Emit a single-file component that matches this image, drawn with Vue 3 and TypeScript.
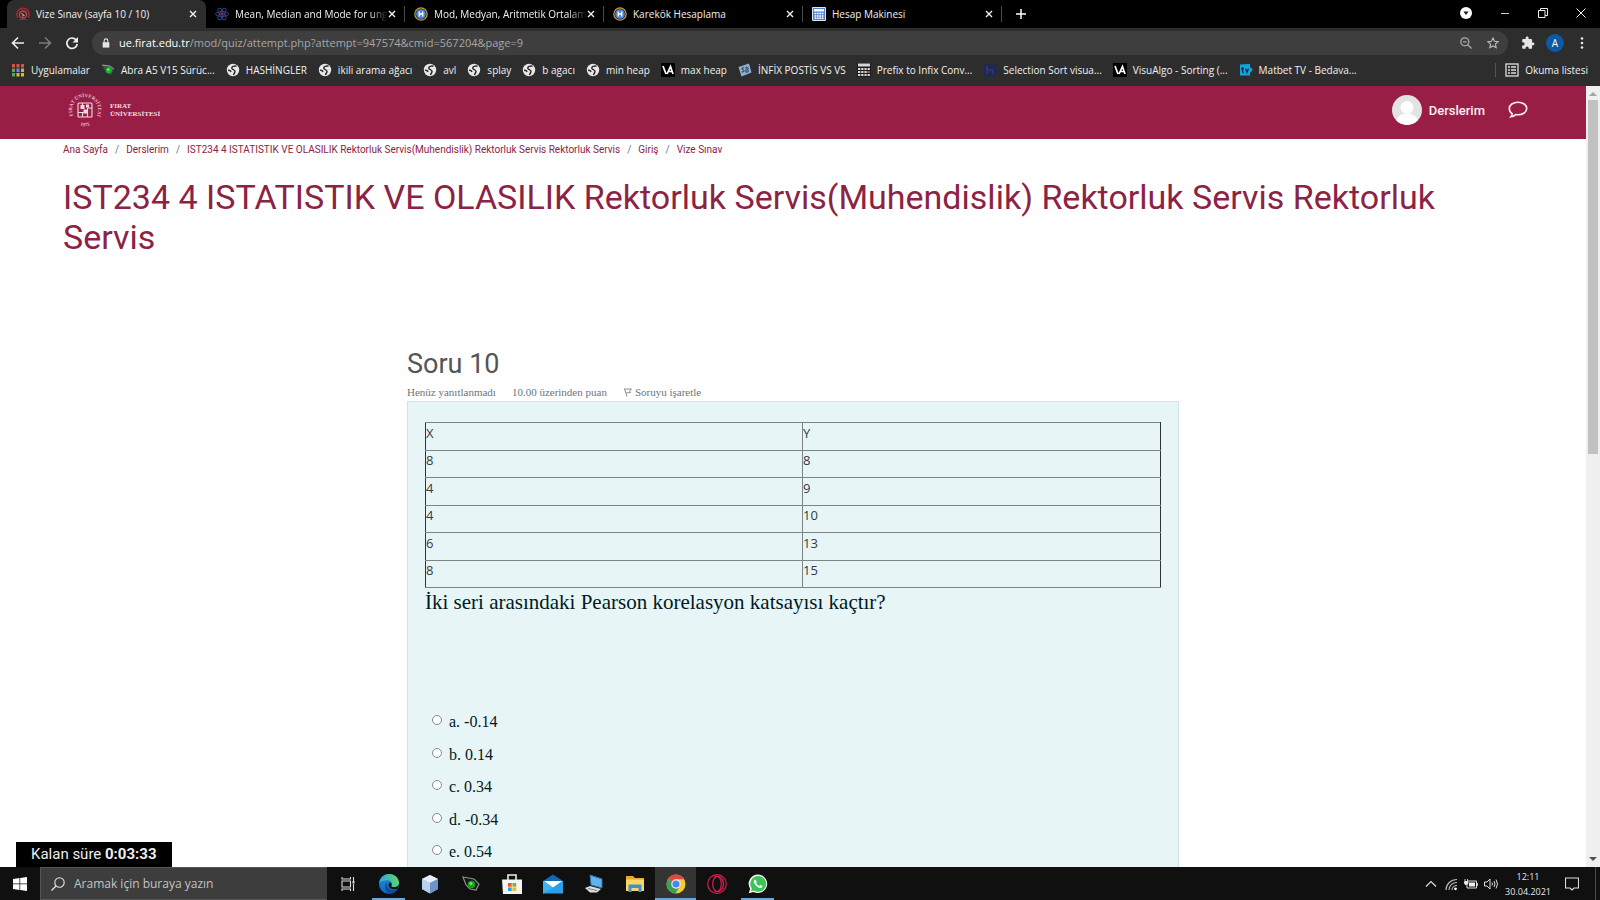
<script setup lang="ts">
import { ref } from 'vue'

interface Tab { title: string; icon: string; active?: boolean; cut?: boolean }
interface Bookmark { label: string; icon: string }

const tabs: Tab[] = [
  { title: 'Vize Sınav (sayfa 10 / 10)', icon: 'quiz', active: true },
  { title: 'Mean, Median and Mode for ung', icon: 'atom', cut: true },
  { title: 'Mod, Medyan, Aritmetik Ortalam', icon: 'h', cut: true },
  { title: 'Karekök Hesaplama', icon: 'h' },
  { title: 'Hesap Makinesi', icon: 'calc' },
]

const bookmarks: Bookmark[] = [
  { label: 'Uygulamalar', icon: 'apps' },
  { label: 'Abra A5 V15 Sürüc...', icon: 'eye' },
  { label: 'HASHİNGLER', icon: 'globe' },
  { label: 'ikili arama ağacı', icon: 'globe' },
  { label: 'avl', icon: 'globe' },
  { label: 'splay', icon: 'globe' },
  { label: 'b agacı', icon: 'globe' },
  { label: 'min heap', icon: 'globe' },
  { label: 'max heap', icon: 'va' },
  { label: 'İNFİX POSTİS VS VS', icon: 'sb' },
  { label: 'Prefix to Infix Conv...', icon: 'grid' },
  { label: 'Selection Sort visua...', icon: 'hh' },
  { label: 'VisuAlgo - Sorting (...', icon: 'va' },
  { label: 'Matbet TV - Bedava...', icon: 'tv' },
]

const appColors = ['#d9534a', '#d9534a', '#d9534a', '#58a55c', '#5b8def', '#e0a93b', '#58a55c', '#e0b93b', '#e0b93b']

const crumbs: string[] = [
  'Ana Sayfa',
  'Derslerim',
  'IST234 4 ISTATISTIK VE OLASILIK Rektorluk Servis(Muhendislik) Rektorluk Servis Rektorluk Servis',
  'Giriş',
  'Vize Sınav',
]

const rows: [string, string][] = [['8', '8'], ['4', '9'], ['4', '10'], ['6', '13'], ['8', '15']]

const options: string[] = ['a. -0.14', 'b. 0.14', 'c. 0.34', 'd. -0.34', 'e. 0.54']
const answer = ref<string>('')
const address = ref('ue.firat.edu.tr/mod/quiz/attempt.php?attempt=947574&cmid=567204&page=9')
const slash = address.value.indexOf('/')
const search = ref('')

const apps: { name: string; running?: boolean; focused?: boolean }[] = [
  { name: 'edge', running: true },
  { name: 'cube' },
  { name: 'eye' },
  { name: 'store' },
  { name: 'mail' },
  { name: 'pc' },
  { name: 'folder' },
  { name: 'chrome', running: true, focused: true },
  { name: 'opera' },
  { name: 'whatsapp', running: true },
]
</script>

<template>
  <div class="screen">
    <div class="tabstrip">
      <div v-for="t in tabs" :key="t.title" class="tab" :class="{ active: t.active }">
        <svg v-if="t.icon === 'quiz'" class="i14" viewBox="0 0 14 14"><path d="M2 10.5A6 6 0 1 1 12 10.500" fill="none" stroke="#b5262f" stroke-width="1.500" /><circle cx="7" cy="7.500" r="3.500" fill="none" stroke="#c9454b" stroke-width="1.300" /><path d="M5.500 6l3 3M7 7.500v2" stroke="#f0b0b0" /><path d="M3 12.500h8" stroke="#9e2a30" /></svg>
        <svg v-else-if="t.icon === 'atom'" class="i14" viewBox="0 0 14 14"><g fill="none" stroke="#34437e" stroke-width="1"><ellipse cx="7" cy="7" rx="6.500" ry="2.500" /><ellipse cx="7" cy="7" rx="6.500" ry="2.500" transform="rotate(60 7 7)" /><ellipse cx="7" cy="7" rx="6.500" ry="2.500" transform="rotate(120 7 7)" /></g><circle cx="7" cy="7" r="1.800" fill="#7a2f5c" /></svg>
        <svg v-else-if="t.icon === 'h'" class="i14" viewBox="0 0 14 14"><circle cx="7" cy="7" r="6.200" fill="#1d2a44" stroke="#c99a2a" stroke-width="1.200" /><circle cx="7" cy="7" r="4.800" fill="#4a86d8" /><path d="M5.300 4.500v5M8.700 4.500v5M5.300 7h3.400" stroke="#fff" stroke-width="1.300" /></svg>
        <svg v-else class="i14" viewBox="0 0 14 14"><rect width="14" height="14" rx="1" fill="#d8e6fa" /><rect x="1" y="1" width="12" height="12" fill="#4c7fd0" /><rect x="2" y="2" width="10" height="2.500" fill="#fff" /><path d="M2.500 6.500h9M2.500 9h9M2.500 11.300h9" stroke="#fff" stroke-width="1.400" stroke-dasharray="1.800 .6" /></svg>
        <span class="tab-title" :class="{ cut: t.cut }">{{ t.title }}</span>
        <button class="bare" aria-label="Sekmeyi kapat"><svg class="i8" viewBox="0 0 8 8"><path d="M1 1l6 6M7 1L1 7" stroke="#f1f1f1" stroke-width="1.400" /></svg></button>
      </div>
      <button class="bare plus" aria-label="Yeni sekme"><svg class="i10" viewBox="0 0 10 10"><path d="M5 0v10M0 5h10" stroke="#fff" stroke-width="1.500" /></svg></button>
      <div class="window-buttons">
        <button class="bare" aria-label="Sekme ara"><svg class="i12" viewBox="0 0 12 12"><circle cx="6" cy="6" r="6" fill="#fff" /><path d="M3.500 4.500h5L6 8z" fill="#111" /></svg></button>
        <button class="bare" aria-label="Simge durumuna küçült"><svg class="i10" viewBox="0 0 10 10"><path d="M1 5.500h8" stroke="#ccc" /></svg></button>
        <button class="bare" aria-label="Önceki boyut"><svg class="i10" viewBox="0 0 10 10"><path d="M.5 2.500h6.500v7H.5zM2.500 2.500v-2h7v7h-2.500" fill="none" stroke="#eee" /></svg></button>
        <button class="bare" aria-label="Kapat"><svg class="i10" viewBox="0 0 10 10"><path d="M.5.500l9 9M9.500.500l-9 9" stroke="#eee" /></svg></button>
      </div>
    </div>

    <div class="toolbar">
      <button class="bare" aria-label="Geri"><svg class="i14" viewBox="0 0 14 14"><path d="M13 7H2M7 1.500L1.500 7 7 12.500" fill="none" stroke="#eee" stroke-width="1.600" /></svg></button>
      <button class="bare" aria-label="İleri"><svg class="i14" viewBox="0 0 14 14"><path d="M1 7h11M7 1.500L12.500 7 7 12.500" fill="none" stroke="#7c7c7c" stroke-width="1.600" /></svg></button>
      <button class="bare" aria-label="Yenile"><svg class="i14" viewBox="0 0 14 14"><path d="M11.500 4.500A5.200 5.200 0 1 0 12.200 8" fill="none" stroke="#eee" stroke-width="1.700" /><path d="M13 1v5.500H7.500z" fill="#eee" /></svg></button>
      <div class="address">
        <svg class="i10" viewBox="0 0 12 12"><path d="M2 5h8v6.500H2z" fill="#e4e4e4" /><path d="M3.800 5V3.200a2.200 2.200 0 0 1 4.400 0V5" fill="none" stroke="#e4e4e4" stroke-width="1.300" /></svg>
        <a class="url" href="#"><span class="host">{{ address.slice(0, slash) }}</span>{{ address.slice(slash) }}</a>
        <button class="bare" aria-label="Yakınlaştırma"><svg class="i12" viewBox="0 0 12 12"><circle cx="4.800" cy="4.800" r="4" fill="none" stroke="#aaa" stroke-width="1.300" /><path d="M3 4.800h3.600M7.800 7.800L11.500 11.500" stroke="#aaa" stroke-width="1.300" /></svg></button>
        <button class="bare" aria-label="Yer işareti"><svg class="i12" viewBox="0 0 12 12"><path d="M6 1l1.500 3.300 3.600.4-2.700 2.400.8 3.600L6 8.900l-3.200 1.800.8-3.600L.9 4.700l3.600-.4z" fill="none" stroke="#bbb" stroke-width="1.100" /></svg></button>
      </div>
      <div class="toolbar-end">
        <button class="bare" aria-label="Uzantılar"><svg class="i14" viewBox="0 0 24 24"><path d="M20.500 11H19V7a2 2 0 0 0-2-2h-4V3.500a2.500 2.500 0 0 0-5 0V5H4a2 2 0 0 0-2 2v3.800h1.500a2.700 2.700 0 0 1 0 5.400H2V20a2 2 0 0 0 2 2h3.800v-1.500a2.700 2.700 0 0 1 5.400 0V22H17a2 2 0 0 0 2-2v-4h1.500a2.500 2.500 0 0 0 0-5z" fill="#e6e6e6" /></svg></button>
        <button class="profile">A</button>
        <button class="bare" aria-label="Menü"><svg class="i14" viewBox="0 0 14 14"><g fill="#e6e6e6"><circle cx="7" cy="2.500" r="1.300" /><circle cx="7" cy="7" r="1.300" /><circle cx="7" cy="11.500" r="1.300" /></g></svg></button>
      </div>
    </div>

    <nav class="bookmarks">
      <a v-for="b in bookmarks" :key="b.label" class="bookmark" href="#">
        <svg v-if="b.icon === 'apps'" class="i14" viewBox="0 0 14 14"><rect v-for="(c, i) in appColors" :key="i" :x="1 + (i % 3) * 4.500" :y="1 + Math.floor(i / 3) * 4.500" width="3" height="3.500" :fill="c" /></svg>
        <svg v-else-if="b.icon === 'eye'" class="i14" viewBox="0 0 14 14"><path d="M1 2l8 1 4 3-3 6-5-2z" fill="#46504a" /><path d="M1 2l8 1 4 3" fill="none" stroke="#9aa39c" /><circle cx="7.800" cy="7.300" r="3" fill="#19b52a" /><circle cx="7.300" cy="6.500" r="1.200" fill="#6df06f" /></svg>
        <svg v-else-if="b.icon === 'globe'" class="i14" viewBox="0 0 14 14"><circle cx="7" cy="7" r="6.200" fill="#e8e8e8" /><path d="M10.500 3.200C8 2.800 5.500 3.500 5.800 5.300c.3 1.500 3.200 1.200 3.200 3.200 0 1.500-1.200 1.800-1.500 3.500M2 7.300c1.300-.2 2.500.2 3 1.700" fill="none" stroke="#2d2d2d" stroke-width="1.500" /></svg>
        <svg v-else-if="b.icon === 'va'" class="i14" viewBox="0 0 14 14"><rect width="14" height="14" fill="#000" /><path d="M2 3l3 8M6 11L9.500 3.500 12 11M7 8.500h4.500" fill="none" stroke="#fff" stroke-width="1.700" /></svg>
        <svg v-else-if="b.icon === 'sb'" class="i14" viewBox="0 0 14 14"><path d="M.5 4L11 .5l2.500 9L3.500 13.500z" fill="#8fb0cc" /><path d="M6 5c-2-.5-3 .8-1 1.800s1 2.500-1.500 2M8 4v5c3 .5 3-2 1-2.300 2-.5 1.500-2.700-1-2.700" fill="none" stroke="#31506e" stroke-width="1.100" /></svg>
        <svg v-else-if="b.icon === 'grid'" class="i14" viewBox="0 0 14 14"><rect width="14" height="14" fill="#1b1b1b" /><path d="M1 2h12" stroke="#d5d5d5" stroke-width="3" /><path d="M1 6h12M1 9h12M1 12h12" stroke="#d5d5d5" stroke-width="2" stroke-dasharray="2.300 .9" /><rect x="10.500" y="8" width="2.500" height="2" fill="#d8433c" /></svg>
        <svg v-else-if="b.icon === 'hh'" class="i14" viewBox="0 0 14 14"><rect width="14" height="14" fill="#22294a" /><path d="M4 3v8M4 7h5.500v4" fill="none" stroke="#2b3a80" stroke-width="1.600" /></svg>
        <svg v-else class="i14" viewBox="0 0 14 14"><path d="M1 1.500L11 1v3l3 2.500L11 10v2.500L1 12.500z" fill="#12a5de" /><path d="M3.500 4v4.500q0 1 1.500 1M2 6h3M6.500 5.500L8 9.500l1.500-4" fill="none" stroke="#0b3550" stroke-width="1.300" /></svg>
        <span>{{ b.label }}</span>
      </a>
      <a class="bookmark reading" href="#">
        <svg class="i14" viewBox="0 0 14 14"><rect x="1" y="1" width="12" height="12" fill="none" stroke="#ddd" stroke-width="1.300" /><path d="M3 4h2M6 4h5M3 7h2M6 7h5M3 10h2M6 10h5" stroke="#ddd" stroke-width="1.300" /></svg>
        <span>Okuma listesi</span>
      </a>
    </nav>

    <div class="viewport">
      <div class="page">
        <header class="site-header">
          <a class="brand" href="#">
            <svg class="seal" viewBox="0 0 36 36">
              <defs>
                <path id="ring-top" d="M8.800 27.200A13 13 0 1 1 27.200 27.200" />
                <path id="ring-bottom" d="M8 30.900A16.300 16.300 0 0 0 28 30.900" />
              </defs>
              <text class="ring" text-anchor="middle"><textPath href="#ring-top" startOffset="50%">FIRAT ÜNİVERSİTESİ</textPath></text>
              <text class="ring" text-anchor="middle"><textPath href="#ring-bottom" startOffset="50%">1975</textPath></text>
              <g fill="none" stroke="#f3dbe3" stroke-width="1.100"><rect x="11" y="11" width="14" height="14" rx="1" /><path d="M11 20.500h9.500M20.500 16v9M15.500 11v4.500M15.500 20.500V25M20.500 16H25" /></g>
              <g fill="#f3dbe3"><rect x="13.500" y="13" width="4" height="4" /><rect x="19" y="12.500" width="3" height="3" /><rect x="16.500" y="17.500" width="4" height="4" /></g>
            </svg>
            <span class="brand-name">FIRAT<br>ÜNİVERSİTESİ</span>
          </a>
          <div class="user">
            <svg class="avatar" viewBox="0 0 30 30"><clipPath id="face"><circle cx="15" cy="15" r="15" /></clipPath><g clip-path="url(#face)"><rect width="30" height="30" fill="#e3e3e3" /><circle cx="15" cy="12.500" r="6.500" fill="#fff" /><ellipse cx="15" cy="27" rx="11" ry="8.500" fill="#fff" /></g></svg>
            <a class="my-courses" href="#">Derslerim</a>
            <button class="bare" aria-label="Mesajlar"><svg class="bubble" viewBox="0 0 20 18"><path d="M10 1.200c4.900 0 8.700 2.700 8.700 6.300s-3.800 6.300-8.700 6.300c-.8 0-1.600-.1-2.300-.2-1.300 1.200-2.800 2-4.800 2.200.8-.9 1.200-1.800 1.300-3C2.300 11.600 1.300 9.700 1.300 7.500c0-3.600 3.800-6.300 8.700-6.300z" fill="none" stroke="#fbeef2" stroke-width="1.600" /></svg></button>
          </div>
        </header>

        <nav class="crumbs">
          <template v-for="(c, i) in crumbs" :key="c"><span v-if="i" class="slash">/</span><a href="#">{{ c }}</a></template>
        </nav>
        <h1>IST234 4 ISTATISTIK VE OLASILIK Rektorluk Servis(Muhendislik) Rektorluk Servis Rektorluk Servis</h1>

        <main class="question">
          <h2>Soru 10</h2>
          <div class="info">
            <span>Henüz yanıtlanmadı</span>
            <span>10.00 üzerinden puan</span>
            <a class="flag" href="#"><svg class="i10" viewBox="0 0 10 10"><path d="M1 2h7.500L6.500 4 7.500 5.500 3 6M1.500 2L4 9.500" fill="none" stroke="#8a8f94" /></svg>Soruyu işaretle</a>
          </div>
          <section class="formulation">
            <table>
              <colgroup><col class="col-x"><col></colgroup>
              <tbody>
                <tr><th scope="col">X</th><th scope="col">Y</th></tr>
                <tr v-for="(r, i) in rows" :key="i"><td>{{ r[0] }}</td><td>{{ r[1] }}</td></tr>
              </tbody>
            </table>
            <p class="prompt">İki seri arasındaki Pearson korelasyon katsayısı kaçtır?</p>
            <div class="answers">
              <label v-for="o in options" :key="o"><input v-model="answer" type="radio" name="answer" :value="o"><span>{{ o }}</span></label>
            </div>
          </section>
        </main>
      </div>

      <div class="scrollbar">
        <svg class="i8" viewBox="0 0 8 8"><path d="M0 6h8L4 2z" fill="#a3a3a3" /></svg>
        <div class="track"><div class="thumb"></div></div>
        <svg class="i8" viewBox="0 0 8 8"><path d="M0 2h8L4 6z" fill="#505050" /></svg>
      </div>
      <div class="timer">Kalan süre <b>0:03:33</b></div>
    </div>

    <footer class="taskbar">
      <button class="bare start" aria-label="Başlat"><svg class="i14" viewBox="0 0 14 14"><path d="M0 2l6.500-1v5.600H0zM7.200 .9L14 0v6.600H7.200zM0 7.300h6.500v5.600L0 12zM7.200 7.300H14V14l-6.800-.9z" fill="#fff" /></svg></button>
      <label class="search">
        <svg class="i14" viewBox="0 0 14 14"><circle cx="8.500" cy="5.500" r="4.700" fill="none" stroke="#e6e6e6" stroke-width="1.100" /><path d="M5 9L.5 13.500" stroke="#e6e6e6" stroke-width="1.200" /></svg>
        <input v-model="search" type="text" placeholder="Aramak için buraya yazın" aria-label="Arama">
      </label>
      <button class="app" aria-label="Görev görünümü"><svg class="i14" viewBox="0 0 14 14"><path d="M1 4h8.500v6H1zM1 0v2h8.500V0M1 14v-2h8.500v2M12.500 0v4M12.500 7v7" fill="none" stroke="#ddd" stroke-width="1.100" /><rect x="11.500" y="4" width="2" height="2.500" fill="#ddd" /></svg></button>
      <button v-for="a in apps" :key="a.name" class="app" :class="{ running: a.running, focused: a.focused }" :aria-label="a.name">
        <svg v-if="a.name === 'edge'" class="i20" viewBox="0 0 20 20"><defs><linearGradient id="edge-a" x1="0" x2="1"><stop offset="0" stop-color="#2aa9e0" /><stop offset="1" stop-color="#5fd465" /></linearGradient><linearGradient id="edge-b" x1="0" x2="0" y1="0" y2="1"><stop offset="0" stop-color="#1c8fdc" /><stop offset="1" stop-color="#1565c0" /></linearGradient></defs><circle cx="10" cy="10" r="10" fill="url(#edge-b)" /><path d="M0 9C1 3.500 5 0 10 0c6 0 10 4.300 10 8.500 0 3-2.200 4.700-5 4.700-2.200 0-3.300-.8-2.500-1.800 1.600-2.500-.5-5.200-4-5.200C4.800 6.200 1.500 7.500 0 9z" fill="url(#edge-a)" /><path d="M8 8c-1.500 3.500 1.500 8 6 8 2 0 3.500-.7 4.500-1.300C17 17.500 14 19.500 11 20 6 19 4.500 11.500 8 8z" fill="#0f4c9c" /><path d="M10.500 8.500c1.500 0 2.500 1.500 2 3-.8 1 .3 1.700 2.500 1.700 2.400 0 4-1 4.600-2.400-.2 2-.6 3-1.100 3.900-3 1-8 .5-9-3-.2-1.500.3-2.500 1-3.200z" fill="#111" /></svg>
        <svg v-else-if="a.name === 'cube'" class="i20" viewBox="0 0 20 20"><path d="M10 1l8 4v10l-8 4.500L2 15V5z" fill="#8fb3dd" /><path d="M10 1l8 4-8 4-8-4z" fill="#e4effa" /><path d="M2 5l8 4v10.500L2 15z" fill="#b9d0ec" /><path d="M18 5l-8 4v10.500l8-4.500z" fill="#6f93c6" /></svg>
        <svg v-else-if="a.name === 'eye'" class="i20" viewBox="0 0 20 20"><path d="M2 3l11 2 5 5-3 6-6-1-4-4z" fill="#161a17" stroke="#8b918c" stroke-width="1.200" /><circle cx="10.500" cy="10.500" r="3.800" fill="#16a01f" /><circle cx="10" cy="9.500" r="1.600" fill="#5ff05b" /></svg>
        <svg v-else-if="a.name === 'store'" class="i20" viewBox="0 0 20 20"><path d="M6 6V1h8v5" fill="none" stroke="#eee" stroke-width="1.600" /><path d="M0 5.500h20V20H1z" fill="#f4f4f4" /><path d="M6 9h3.700v3.700H6z" fill="#e8562a" /><path d="M10.500 9h3.700v3.700h-3.700z" fill="#7db52b" /><path d="M6 13.400h3.700V17H6z" fill="#2b9de0" /><path d="M10.500 13.400h3.700V17h-3.700z" fill="#f6b91b" /></svg>
        <svg v-else-if="a.name === 'mail'" class="i20" viewBox="0 0 20 20"><path d="M0 7l10-6.500L20 7v3H0z" fill="#1268b3" /><path d="M0 7h20v12.500H0z" fill="#2ba0e6" /><path d="M1 7h18l-9 6.500z" fill="#fff" /><path d="M0 7l10 7L0 19.500z" fill="#3db4f0" /></svg>
        <svg v-else-if="a.name === 'pc'" class="i20" viewBox="0 0 20 20"><path d="M6 1l12 4v9L7 11z" fill="#5fb4ee" stroke="#2e6ea5" /><path d="M1 14l5-2 11 3-4 3.500H6z" fill="#d8dce0" /><path d="M4 14.500l9 2" stroke="#7b838a" /></svg>
        <svg v-else-if="a.name === 'folder'" class="i20" viewBox="0 0 20 20"><path d="M1 2h7l2 2h9v13H1z" fill="#e3a82a" /><path d="M1 5.500h18V17H1z" fill="#fbd667" /><path d="M3.500 18v-7.500h13V18h-3v-4h-7v4z" fill="#3f92cf" /></svg>
        <svg v-else-if="a.name === 'chrome'" class="i20" viewBox="0 0 20 20"><circle cx="10" cy="10" r="9.500" fill="#f9c939" /><path d="M10 10L1.800 5.200A9.500 9.500 0 0 1 18.200 5.200H10z" fill="#dd4a3c" /><path d="M1.800 5.200A9.500 9.500 0 0 0 9.500 19.500l4.300-7.300-3.800-2.200z" fill="#3ba057" /><circle cx="10" cy="10" r="4.700" fill="#f4f4f4" /><circle cx="10" cy="10" r="3.600" fill="#4a86ee" /></svg>
        <svg v-else-if="a.name === 'opera'" class="i20" viewBox="0 0 20 20"><g fill="none" stroke="#d81f4c" stroke-width="1.200"><circle cx="10" cy="10" r="9.300" /><ellipse cx="10" cy="10" rx="4.300" ry="7.500" /><path d="M7 3.500c5-3 9.500 1 9.500 6.500S12 19.500 7 16.500" /></g></svg>
        <svg v-else class="i20" viewBox="0 0 20 20"><path d="M10 .5a9.300 9.300 0 1 1-4.500 17.500L.8 19.300l1.300-4.600A9.300 9.300 0 0 1 10 .5z" fill="#f1f5f1" /><path d="M10 2a7.900 7.900 0 1 1-4.200 14.500L3 17.200l.8-2.700A7.900 7.900 0 0 1 10 2z" fill="#3cc457" /><path d="M7 5.500c-1.500.5-1.500 2.500-.5 4 1.300 2.300 3.300 4 5.500 4.500 1.300.2 2.500-.7 2.500-2L12.300 11l-1 1c-1.500-.6-2.500-1.600-3.200-3l.8-1z" fill="#fff" /></svg>
      </button>
      <div class="tray">
        <svg class="i14" viewBox="0 0 14 14"><path d="M2 9.500l5-5 5 5" fill="none" stroke="#ddd" stroke-width="1.200" /></svg>
        <svg class="i14" viewBox="0 0 14 14"><g fill="none" stroke="#bbb" stroke-width="1.100"><path d="M2 13C2 7 7 2.500 13 2.500M5 13c0-4.500 3.500-7.500 8-7.500M8 13c0-2.500 2-4.500 5-4.500" /></g><circle cx="11.500" cy="11.800" r="1.400" fill="#fff" /></svg>
        <svg class="i14" viewBox="0 0 14 14"><path d="M4 4h8.500v7H3V8" fill="none" stroke="#ddd" /><rect x="5" y="5.500" width="6" height="4" fill="#eee" /><path d="M13.500 6v3M1 2v2M3.500 2v2M.5 4.500h3.500v1.500a1.700 1.700 0 0 1-3.500 0z" fill="#eee" stroke="#eee" stroke-width=".8" /></svg>
        <svg class="i14" viewBox="0 0 14 14"><path d="M.5 5h2.500L6 2v10L3 9H.5zM8 5.500q1 1.500 0 3M10 4q2 3 0 6M12 2.500q3 4.500 0 9" fill="none" stroke="#ddd" /></svg>
        <time class="clock">12:11<br>30.04.2021</time>
        <svg class="i14" viewBox="0 0 14 14"><path d="M.5 1h13v10H9L7 13 5 11H.5z" fill="none" stroke="#ddd" stroke-width="1.100" /></svg>
      </div>
    </footer>
  </div>
</template>

<style>
html,
body {
  margin: 0;
  overflow: hidden;
}
</style>

<style scoped>
.screen {
  display: flex;
  flex-direction: column;
  height: 100vh;
  overflow: hidden;
  background: #fff;
  font-family: "Open Sans", "Noto Sans", sans-serif;
  font-size: 10px;
}
.screen *,
.screen *::before {
  box-sizing: border-box;
}
svg {
  display: block;
  flex: none;
}
a {
  color: inherit;
  text-decoration: none;
}
.bare {
  display: flex;
  align-items: center;
  justify-content: center;
  padding: 0;
  border: 0;
  background: none;
}
.i8 { width: 8px; height: 8px; }
.i10 { width: 10px; height: 10px; }
.i12 { width: 12px; height: 12px; }
.i14 { width: 14px; height: 14px; }
.i20 { width: 20px; height: 20px; }

.tabstrip {
  display: flex;
  flex: none;
  height: 28px;
  padding-left: 7px;
  background: #000;
  color: #f1f1f1;
}
.tab {
  display: flex;
  align-items: center;
  flex: 0 1 199px;
  min-width: 0;
  padding: 0 9px;
  background: linear-gradient(#4a4a4a, #4a4a4a) right center / 1px 16px no-repeat;
}
.tab.active {
  border-radius: 7px 7px 0 0;
  background: #2d2d2d;
}
.tab-title {
  flex: 1;
  min-width: 0;
  margin-left: 6px;
  overflow: hidden;
  white-space: nowrap;
}
.tab-title.cut {
  mask-image: linear-gradient(to right, #000 88%, transparent);
}
.plus {
  width: 38px;
}
.window-buttons {
  display: flex;
  align-items: center;
  gap: 28px;
  margin-left: auto;
  padding: 0 14px 3px 0;
}

.toolbar {
  display: flex;
  align-items: center;
  gap: 13px;
  flex: none;
  height: 29px;
  padding: 0 11px;
  background: #2d2d2d;
}
.address {
  display: flex;
  align-items: center;
  gap: 15px;
  flex: 1;
  height: 24px;
  padding: 0 9px;
  border-radius: 12px;
  background: #3e3e3e;
}
.address > svg {
  margin-right: -7px;
}
.url {
  flex: 1;
  color: #a6a6a6;
  font-size: 11px;
}
.host {
  color: #fff;
}
.toolbar-end {
  display: flex;
  align-items: center;
  gap: 11px;
}
.profile {
  width: 18px;
  height: 18px;
  padding: 0;
  border: 0;
  border-radius: 50%;
  background: #0b5aa6;
  color: #fff;
  font: 10px/18px "Open Sans", sans-serif;
}

.bookmarks {
  display: flex;
  align-items: center;
  gap: 11px;
  flex: none;
  height: 29px;
  padding: 0 12px 3px 11px;
  background: #2d2d2d;
  color: #f1f1f1;
}
.bookmark {
  display: flex;
  align-items: center;
  gap: 6px;
  white-space: nowrap;
}
.reading {
  margin-left: auto;
  padding-left: 9px;
  border-left: 1px solid #555;
}

.viewport {
  position: relative;
  display: flex;
  flex: 1;
  min-height: 0;
}
.page {
  flex: 1;
  min-width: 0;
  overflow: hidden;
  color: #1d2125;
  font-family: Roboto, sans-serif;
}
.site-header {
  display: flex;
  align-items: center;
  justify-content: space-between;
  height: 53px;
  padding: 0 58px 5px 67px;
  background: #981e46;
}
.brand {
  display: flex;
  align-items: center;
  gap: 7px;
  color: #f3dbe3;
}
.seal {
  width: 36px;
  height: 36px;
}
.ring {
  fill: #e7bccb;
  font: bold 5px "Liberation Serif", serif;
}
.brand-name {
  font: bold 7px/8px "Liberation Serif", serif;
}
.user {
  display: flex;
  align-items: center;
  gap: 7px;
}
.avatar {
  width: 30px;
  height: 30px;
}
.my-courses {
  margin-right: 16px;
  color: #fbeef2;
  font-size: 13px;
  font-weight: 500;
}
.bubble {
  width: 20px;
  height: 18px;
}
.crumbs {
  display: flex;
  gap: 7px;
  padding: 4px 63px 0;
  color: #8c2344;
  font-size: 10px;
  line-height: 14px;
}
.slash {
  color: #6c757d;
}
h1 {
  margin: 20px 63px 0;
  color: #8c2344;
  font-size: 34px;
  font-weight: 400;
  line-height: 40px;
}
.question {
  width: 772px;
  max-width: 100%;
  margin: 91px auto 0;
}
h2 {
  margin: 0;
  color: #555;
  font-size: 27px;
  font-weight: 400;
  line-height: 32px;
}
.info {
  display: flex;
  gap: 16px;
  margin-top: 4px;
  color: #6c757d;
  font: 11px/16px "Liberation Serif", serif;
}
.flag {
  display: flex;
  align-items: center;
  gap: 2px;
}
.formulation {
  min-height: 480px;
  margin-top: 1px;
  padding: 20px 17px;
  border: 1px solid #cbe6ea;
  background: #e7f5f7;
}
table {
  width: 100%;
  border: 1px solid #333;
  border-collapse: collapse;
  color: #373a3c;
  font: 13px/18px "Open Sans", sans-serif;
}
.col-x {
  width: 377px;
}
tr {
  height: 28px;
}
tr:nth-child(even) {
  height: 27px;
}
th,
td {
  padding: 0 0 8px;
  border: 1px solid #7b8586;
  font-weight: 400;
  text-align: left;
  vertical-align: middle;
}
th:first-child,
td:first-child {
  border-left-color: #333;
}
th:last-child,
td:last-child {
  border-right-color: #333;
}
.prompt {
  margin: 1px 0 0;
  color: #001a1e;
  font: 21px/26px "Liberation Serif", serif;
}
.answers {
  display: flex;
  flex-direction: column;
  justify-content: space-between;
  height: 152px;
  margin-top: 96px;
  padding-left: 7px;
  color: #001a1e;
  font: 16px/22px "Liberation Serif", serif;
}
.answers label {
  display: flex;
  gap: 7px;
}
.answers input {
  width: 10px;
  height: 10px;
  margin: 4px 0 0;
  border: 1px solid #888;
  border-radius: 50%;
  appearance: none;
  background: #fff;
}
.answers input:checked {
  border-width: 3px;
}

.scrollbar {
  display: flex;
  flex-direction: column;
  align-items: center;
  flex: none;
  width: 14px;
  padding: 4px 0;
  background: #f0f0f0;
}
.track {
  flex: 1;
  width: 10px;
  padding: 2px 0;
}
.thumb {
  height: 47%;
  background: #c1c1c1;
}
.timer {
  position: absolute;
  bottom: 0;
  left: 16px;
  padding: 0 15px;
  background: #000;
  color: #eee;
  font: 15px/25px Roboto, sans-serif;
}

.taskbar {
  display: flex;
  align-items: stretch;
  flex: none;
  height: 33px;
  background: #101010;
}
.start {
  width: 40px;
}
.search {
  display: flex;
  align-items: center;
  gap: 9px;
  width: 287px;
  padding: 0 10px;
  border: 1px solid #555;
  border-width: 1px 0 1px 1px;
  background: #3d3d3d;
}
.search input {
  flex: 1;
  min-width: 0;
  padding: 0;
  border: 0;
  outline: 0;
  background: none;
  color: #fff;
  font: 12px/16px "Open Sans", sans-serif;
}
.search input::placeholder {
  color: #c4c4c4;
  opacity: 1;
}
.app {
  display: flex;
  align-items: center;
  justify-content: center;
  width: 41px;
  padding: 0;
  border: 0;
  background: none;
}
.app.running {
  background: linear-gradient(#69a8dc, #69a8dc) center bottom / 33px 2px no-repeat;
}
.app.focused {
  background: linear-gradient(#69a8dc, #69a8dc) center bottom / 41px 2px no-repeat #343434;
}
.tray {
  display: flex;
  align-items: center;
  gap: 6px;
  margin-left: auto;
  margin-right: 4px;
  padding-right: 16px;
  border-right: 1px solid #4a4a4a;
  color: #e6e6e6;
}
.clock {
  margin: 0 8px 0 1px;
  text-align: center;
  font-size: 9px;
  line-height: 15px;
}
</style>
